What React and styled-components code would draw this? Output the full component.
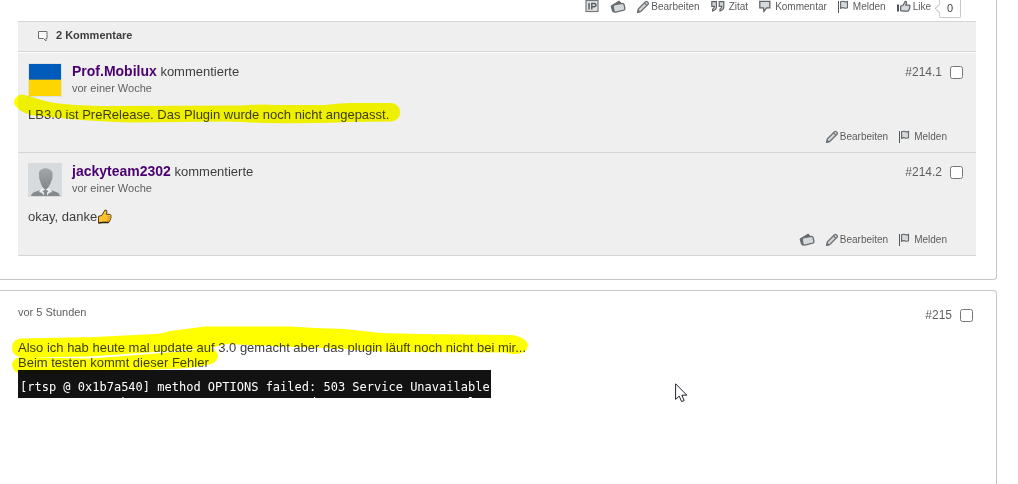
import styled, { createGlobalStyle, css } from "styled-components";

const GlobalStyle = createGlobalStyle`
  * {
    box-sizing: border-box;
  }

  body {
    margin: 0;
    background: #fff;
    color: #3e3e3e;
    font-family: "Liberation Sans", Arial, sans-serif;
    font-size: 13px;
    line-height: 15px;
  }
`;

/* icons */

function IpIcon() {
  return (
    <svg width="14" height="14" viewBox="0 0 14 14" aria-hidden="true">
      <rect x="1" y="0.5" width="12" height="11" fill="#dfe2e4" stroke="#74787b" strokeWidth="1.2" />
      <path d="M4 3v6.500M6.800 9.500V3.500h2.500a1.400 1.400 0 0 1 0 3.200H6.800" fill="none" stroke="#5b5f62" strokeWidth="1.500" />
    </svg>
  );
}

function TagIcon() {
  return (
    <svg width="16" height="14" viewBox="0 0 16 14" aria-hidden="true">
      <path d="M1 6 9.200 1l2 2.300L4 12.200 2.600 11.400z" fill="#676b6e" stroke="#676b6e" strokeLinejoin="round" />
      <path d="M4.800 4.700 12.500 3.300Q13.600 3.300 14 4.500L14.900 8.200Q15 9.800 13.800 10.200L5.800 12.100Q4.500 12.300 4 11L3.200 7Q3.100 5.200 4.800 4.700z" fill="#d5d8da" stroke="#676b6e" strokeWidth="1.300" />
    </svg>
  );
}

function PencilIcon() {
  return (
    <svg width="12" height="14" viewBox="0 0 12 14" aria-hidden="true">
      <path d="M.7 12.300 1.500 8.700 8.500 1.700Q9.400 1 10.300 1.800L11 2.500Q11.800 3.400 11 4.300L4 11.300z" fill="#d3d6d8" stroke="#6f7376" strokeWidth="1.300" strokeLinejoin="round" />
      <path d="M.7 12.300 1.200 10.200 2.700 11.700zM7.500 2.900l2.400 2.400" fill="#6f7376" stroke="#6f7376" strokeWidth="1.200" />
    </svg>
  );
}

function QuoteIcon() {
  return (
    <svg width="14" height="14" viewBox="0 0 14 14" aria-hidden="true">
      <path d="M.8 1.700h4.600v5.400Q5.300 10 1.600 10.900V9.200Q3.300 8.400 3.400 6.300H.8zM8.200 1.700h4.600v5.400Q12.700 10 9 10.900V9.200q1.700-.8 1.800-2.900H8.200z" fill="#d4d7d9" stroke="#606467" strokeWidth="1.200" />
    </svg>
  );
}

function SpeechIcon() {
  return (
    <svg width="12" height="14" viewBox="0 0 12 14" aria-hidden="true">
      <path d="M.8 1.300h10v6.600H7.600L5 11.400l-.6-3.500H.8z" fill="#d6d9db" stroke="#606467" strokeWidth="1.300" />
    </svg>
  );
}

function FlagIcon() {
  return (
    <svg width="11" height="14" viewBox="0 0 11 14" aria-hidden="true">
      <path d="M.5 1v12" stroke="#55595c" />
      <path d="M2.600 1.800Q4.300.9 6 1.600t3.500-.2v6.400Q8 8.600 6.300 7.900t-3.700.4z" fill="#d6d9db" stroke="#606467" strokeWidth="1.100" />
    </svg>
  );
}

function LikeIcon() {
  return (
    <svg width="14" height="14" viewBox="0 0 14 14" aria-hidden="true">
      <path d="M1 4.500v7" stroke="#505457" strokeWidth="2" />
      <path d="M3.600 6.200 6.300 5 8.200 1.300q1.500-.1 1.200 1.800L8.700 5.200h3.800q.8.600.2 1.600.4.900-.3 1.600.2.900-.5 1.400 0 1-1 1.400H6.400L3.600 10.600z" fill="#d6d9db" stroke="#606467" strokeWidth="1.200" strokeLinejoin="round" />
    </svg>
  );
}

function BubbleIcon() {
  return (
    <svg width="12" height="12" viewBox="0 0 12 12" aria-hidden="true">
      <path d="M1.500 1.500h8.500v7H9V11L6.500 8.500h-5z" fill="#fafafa" stroke="#6c7073" />
    </svg>
  );
}

function ThumbEmoji() {
  return (
    <svg width="15" height="18" viewBox="0 0 15 18" role="img" aria-label="Daumen hoch">
      <path d="M1.500 9.300 4.700 8.500 8 3Q10 2.600 9.900 4.800L9.500 7.400h3.700q1.300.8.700 2.100.5 1.200-.3 2.100.1 1.400-.8 2-.2 1.700-1.500 1.800H5.600L1.500 16.200z" fill="#fcc12d" stroke="#554017" strokeLinejoin="round" />
      <path d="M2 15.900 5.600 15.500h6" fill="none" stroke="#2a2318" strokeWidth="1.400" />
      <path d="M10.500 9.700h2.500M10.300 11.600h2.500M10 13.400h2" stroke="#d9971a" />
    </svg>
  );
}

function FlagAvatar() {
  return (
    <svg width="34" height="34" viewBox="0 0 34 34" aria-hidden="true">
      <path d="M0 0h34v34H0z" fill="#dfe2e5" />
      <path d="M1 1h32v16H1z" fill="#005bbb" />
      <path d="M1 17h32v16H1z" fill="#ffd500" />
      <path d="M1 16h32v1H1z" fill="#5e8270" />
    </svg>
  );
}

function BlankAvatar() {
  return (
    <svg width="34" height="34" viewBox="0 0 34 34" aria-hidden="true">
      <defs>
        <linearGradient id="person" x1="0" y1="0" x2="0" y2="1">
          <stop offset="0" stopColor="#a3a7a9" />
          <stop offset="1" stopColor="#818587" />
        </linearGradient>
      </defs>
      <path d="M0 0h34v34H0z" fill="#d8dbdd" />
      <path d="M3 33q.5-3.500 5-4.500 4-1 5.500-2.500h8q1.500 1.500 5.500 2.500 4.500 1 5 4.500z" fill="#858a8c" />
      <path d="M13 25.500h9L24 29l-3 1-2 3h-3l-2-3-3-1z" fill="#eceeef" />
      <path d="M14.500 28 17.500 26.500 20.500 28 18.800 30 19.500 33h-4l.7-3z" fill="#858a8c" />
      <path d="M11.200 13Q10 7.500 13.500 6.500q4-2.500 8 0 4 1.500 3 6.500.3 3-1 4.500-1.500 6-6 9.500-4.500-3.500-5.500-9.500Q10.500 15.500 11.200 13z" fill="url(#person)" />
    </svg>
  );
}

function Pointer() {
  return (
    <svg width="13" height="20" viewBox="0 0 13 20" aria-hidden="true">
      <path d="M.6.8v15.600l3.600-3.300 2.400 5.500 2.600-1.100-2.400-5.300h5z" fill="#fff" stroke="#23232f" />
    </svg>
  );
}

/* layout */

const Page = styled.main`
  position: relative;
  display: flex;
  flex-direction: column;
  gap: 10px;
  min-height: 100vh;
  padding-right: 21px;
  overflow: hidden;
`;

const Card = styled.article`
  border: 1px solid #c6c6c6;
  border-left: 0;
  padding: 0 20px 23px 18px;

  ${(p) =>
    p.$open
      ? css`
          flex: 1;
          border-bottom: 0;
          border-top-right-radius: 4px;
          padding-top: 13px;
        `
      : css`
          border-top: 0;
          border-bottom-right-radius: 4px;
        `}
`;

const Toolbar = styled.div`
  display: flex;
  justify-content: flex-end;
  align-items: flex-start;
  gap: 11px;
  height: ${(p) => (p.$compact ? "16px" : "21px")};
  padding-right: ${(p) => (p.$compact ? "29px" : "15px")};
`;

const ToolButton = styled.button`
  display: flex;
  align-items: center;
  gap: ${(p) => p.$gap || 2}px;
  height: 14px;
  padding: 0;
  border: 0;
  background: none;
  color: #5c5c5c;
  font: 10px/14px "Liberation Sans", Arial, sans-serif;
  cursor: pointer;

  svg {
    flex: none;
  }
`;

const LikeCount = styled.span`
  position: relative;
  width: 22px;
  height: 18px;
  margin-left: -3px;
  border: 1px solid #c8c8c8;
  border-top: 0;
  border-radius: 0 0 2px 2px;
  color: #3e3e3e;
  font-size: 11px;
  line-height: 17px;
  text-align: center;

  &::before {
    content: "";
    position: absolute;
    left: -4px;
    top: 5px;
    width: 6px;
    height: 6px;
    border: solid #c8c8c8;
    border-width: 0 0 1px 1px;
    background: #fff;
    transform: rotate(45deg);
  }
`;

const Comments = styled.section`
  border-top: 1px solid #d3d5d7;
  background: #efefef;
`;

const CommentsTitle = styled.h4`
  display: flex;
  align-items: center;
  gap: 7px;
  height: 30px;
  margin: 0 0 1px;
  padding: 0 19px 2px;
  border-bottom: 1px solid #d3d5d7;
  box-shadow: 0 1px #fff;
  font-size: 11px;
`;

const CommentBox = styled.div`
  padding: 10px 0 6px;
  border-bottom: 1px solid #d3d5d7;
`;

const Header = styled.header`
  display: flex;
  align-items: flex-start;
  gap: 10px;
  height: ${(p) => (p.$post ? "36px" : "34px")};
  padding: ${(p) => (p.$post ? "0 3px 0 0" : "0 13px 0 10px")};
`;

const Byline = styled.div`
  flex: 1;
`;

const Author = styled.a`
  color: #4b0070;
  font-size: 14px;
  font-weight: bold;
  text-decoration: none;
`;

const Line = styled.div`
  height: 17px;
  line-height: 17px;
`;

const Time = styled.time`
  display: block;
  color: #5f5f5f;
  font-size: 11px;
  line-height: 17px;
`;

const Permalink = styled.label`
  display: flex;
  align-items: center;
  gap: 8px;
  height: 18px;
  margin-top: ${(p) => (p.$post ? "2px" : "0")};
  color: #5f5f5f;
  font-size: 12px;

  input {
    width: 13px;
    height: 13px;
    margin: 0;
  }
`;

const Body = styled.div`
  position: relative;
  display: flex;
  align-items: center;
  margin: 10px 10px 8px;
`;

const PostText = styled.div`
  position: relative;
`;

const Marker = styled.svg`
  position: absolute;
  left: ${(p) => p.$left}px;
  top: ${(p) => p.$top}px;
  mix-blend-mode: multiply;
  pointer-events: none;
  fill: #ff0;
`;

const Console = styled.pre`
  width: fit-content;
  max-width: 100%;
  height: 28px;
  margin: 0;
  padding: 9px 1px 0 2px;
  overflow: hidden;
  background: #121212;
  color: #fff;
  font: 12px/16px "DejaVu Sans Mono", monospace;
`;

const Cursor = styled.div`
  position: absolute;
  left: 675px;
  top: 383px;
`;

function CommentTools({ own }) {
  return (
    <Toolbar $compact>
      {own && (
        <ToolButton type="button" aria-label="Markieren">
          <TagIcon />
        </ToolButton>
      )}
      <ToolButton type="button">
        <PencilIcon />
        Bearbeiten
      </ToolButton>
      <ToolButton type="button" $gap={4}>
        <FlagIcon />
        Melden
      </ToolButton>
    </Toolbar>
  );
}

function Comment({ avatar, author, number, own, children }) {
  return (
    <CommentBox>
      <Header>
        {avatar}
        <Byline>
          <Line>
            <Author href="#">{author}</Author> kommentierte
          </Line>
          <Time>vor einer Woche</Time>
        </Byline>
        <Permalink>
          {number}
          <input type="checkbox" />
        </Permalink>
      </Header>
      <Body>{children}</Body>
      <CommentTools own={own} />
    </CommentBox>
  );
}

export default function App() {
  return (
    <>
      <GlobalStyle />
      <Page>
        <Card>
          <Toolbar>
            <ToolButton type="button" aria-label="IP">
              <IpIcon />
            </ToolButton>
            <ToolButton type="button" aria-label="Markieren">
              <TagIcon />
            </ToolButton>
            <ToolButton type="button">
              <PencilIcon />
              Bearbeiten
            </ToolButton>
            <ToolButton type="button" $gap={4}>
              <QuoteIcon />
              Zitat
            </ToolButton>
            <ToolButton type="button" $gap={4}>
              <SpeechIcon />
              Kommentar
            </ToolButton>
            <ToolButton type="button" $gap={4}>
              <FlagIcon />
              Melden
            </ToolButton>
            <ToolButton type="button">
              <LikeIcon />
              Like
            </ToolButton>
            <LikeCount>0</LikeCount>
          </Toolbar>

          <Comments>
            <CommentsTitle>
              <BubbleIcon />2 Kommentare
            </CommentsTitle>
            <Comment avatar={<FlagAvatar />} author="Prof.Mobilux" number="#214.1">
              LB3.0 ist PreRelease. Das Plugin wurde noch nicht angepasst.
              <Marker $left={-18} $top={-17} width="400" height="36" viewBox="10 90 400 36">
                <path d="M14 103Q14 96 22 94.500Q27 95 38 99Q50 103 64 104Q85 106 115 106L240 105.500Q262 104 275 105L325 105Q340 103 352 103L392 103Q400 105 400 112Q400 120 392 121.500L348 122Q325 123.500 262 123Q245 122 225 121.500L130 122.500Q90 121 60 118L30 115Q16 110 14 103Z" />
              </Marker>
            </Comment>
            <Comment avatar={<BlankAvatar />} author="jackyteam2302" number="#214.2" own>
              okay, danke
              <ThumbEmoji />
            </Comment>
          </Comments>
        </Card>

        <Card $open>
          <Header $post>
            <Byline>
              <Time>vor 5 Stunden</Time>
            </Byline>
            <Permalink $post>
              #215
              <input type="checkbox" />
            </Permalink>
          </Header>
          <PostText>
            Also ich hab heute mal update auf 3.0 gemacht aber das plugin läuft noch nicht bei mir...
            <br />
            Beim testen kommt dieser Fehler
            <Marker $left={-10} $top={-18} width="524" height="56" viewBox="8 322 524 56">
              <path d="M12 348Q12 340 20 338.500L95 337L155 334Q165 333 170 331Q185 329 205 326.500L290 326.500L315 328L345 329L380 333L420 334L512 335Q528 338 528 346Q526 355 512 354L505 352.500L400 352Q360 351 345 349L270 346L226 344Q218 346 210 348Q218 350 218 357Q216 364 206 365Q190 369 165 369L100 372L22 374Q12 372 12 364Q13 359 20 357Q12 355 12 348Z" />
              <path d="M28 357.500L90 356.500L140 353L178 350.500L205 348L186 351L150 354L90 358.500Z" fill="#fff" />
            </Marker>
          </PostText>
          <Console>
            {"[rtsp @ 0x1b7a540] method OPTIONS failed: 503 Service Unavailable\n"}
            {"rtsp://camera.home:554/x: Server returned 5XX Server Error reply"}
          </Console>
        </Card>

        <Cursor>
          <Pointer />
        </Cursor>
      </Page>
    </>
  );
}
